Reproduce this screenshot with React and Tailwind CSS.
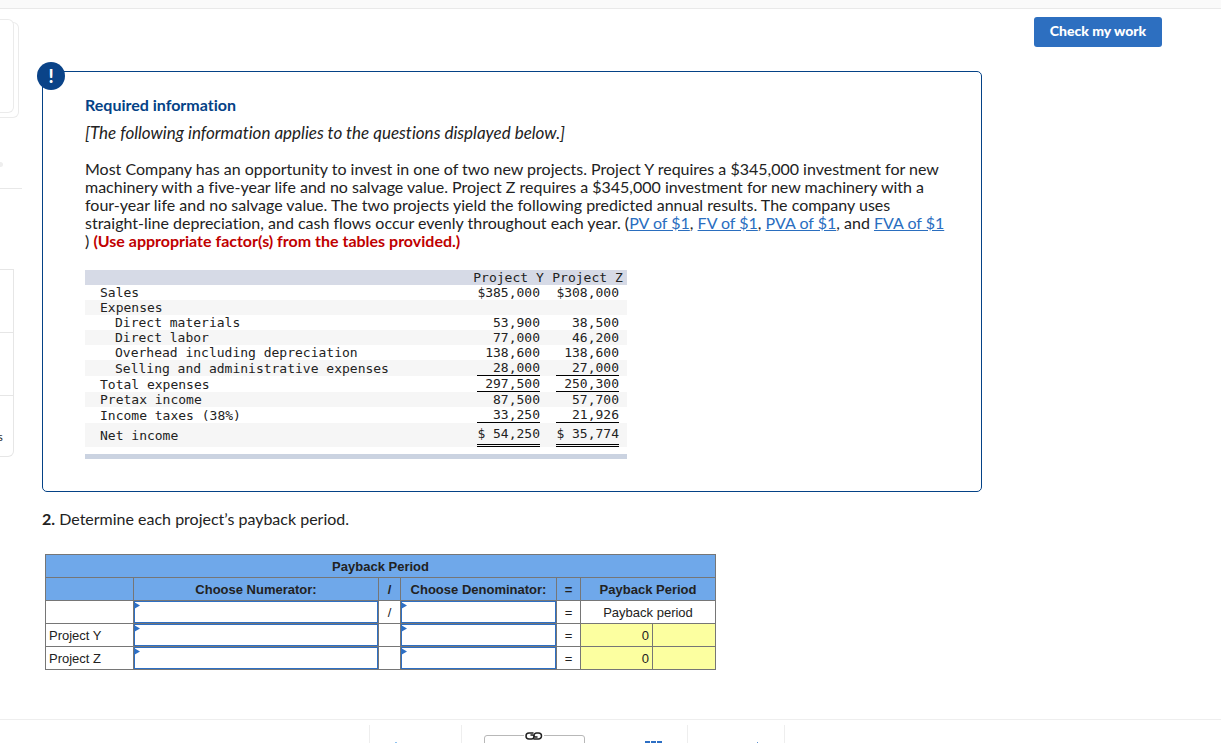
import React, { useState } from 'react';

const results = [
  { label: 'Sales', y: '$385,000', z: '$308,000' },
  { label: 'Expenses', y: '', z: '' },
  { label: 'Direct materials', y: '53,900', z: '38,500', indent: true },
  { label: 'Direct labor', y: '77,000', z: '46,200', indent: true },
  { label: 'Overhead including depreciation', y: '138,600', z: '138,600', indent: true },
  { label: 'Selling and administrative expenses', y: '28,000', z: '27,000', indent: true, line: true },
  { label: 'Total expenses', y: '297,500', z: '250,300', line: true },
  { label: 'Pretax income', y: '87,500', z: '57,700' },
  { label: 'Income taxes (38%)', y: '33,250', z: '21,926', line: true },
];

const link = 'text-[#2a6ebf] underline';
const cell = 'border border-[#767676] p-0 pt-[2px]';

function ResultsTable() {
  return (
    <table className="w-[542px] table-fixed border-collapse text-[13px] leading-[15px] [font-family:'DejaVu_Sans_Mono',monospace]">
      <colgroup>
        <col />
        <col className="w-[79px]" />
        <col className="w-[79px]" />
      </colgroup>
      <thead>
        <tr className="bg-[#d6dae6]">
          <td className="p-0" />
          <th className="p-0 text-center font-normal whitespace-nowrap">Project Y</th>
          <th className="p-0 text-center font-normal whitespace-nowrap">Project Z</th>
        </tr>
      </thead>
      <tbody>
        {results.map((r) => (
          <tr key={r.label} className="even:bg-[#f6f6f6]">
            <td className={r.indent ? 'p-0 pl-[30px] align-bottom' : 'p-0 pl-[15px] align-bottom'}>{r.label}</td>
            {[r.y, r.z].map((v, i) => (
              <td key={i} className="p-0">
                <div className={r.line ? 'mx-auto w-[63px] border-b border-black text-right' : 'mx-auto w-[63px] text-right'}>
                  {v}
                </div>
              </td>
            ))}
          </tr>
        ))}
        <tr className="bg-[#f6f6f6]">
          <td className="p-0 pl-[15px]">Net income</td>
          {['$ 54,250', '$ 35,774'].map((v) => (
            <td key={v} className="p-0 pt-[3px]">
              <div className="mx-auto w-[63px] border-b-3 border-double border-black pb-[3px] text-right">{v}</div>
            </td>
          ))}
        </tr>
      </tbody>
    </table>
  );
}

function Entry({ label }) {
  const [value, setValue] = useState('');
  return (
    <div className="relative h-[22px]">
      <input
        aria-label={label}
        value={value}
        onChange={(e) => setValue(e.target.value)}
        className="block h-full w-full border border-[#2d6fc4] bg-white px-1 outline-none"
      />
      <svg className="absolute top-px left-0" width="6" height="7" viewBox="0 0 6 7" aria-hidden="true">
        <path d="M0 0L6 3.5L0 7Z" fill="#2d6fc4" />
      </svg>
    </div>
  );
}

function PaybackTable() {
  return (
    <table className="w-[671px] table-fixed border-collapse text-[13px] leading-4 text-[#222] [font-family:'Liberation_Sans',Arial,sans-serif]">
      <colgroup>
        <col className="w-[88px]" />
        <col className="w-[245px]" />
        <col className="w-[22px]" />
        <col className="w-[156px]" />
        <col className="w-[24px]" />
        <col className="w-[72px]" />
        <col className="w-[63px]" />
      </colgroup>
      <thead className="bg-[#6fa8ea]">
        <tr className="h-[23px]">
          <th className={cell} colSpan="7">Payback Period</th>
        </tr>
        <tr className="h-[23px]">
          <td className={cell} />
          <th className={cell}>Choose Numerator:</th>
          <th className={cell}>/</th>
          <th className={cell}>Choose Denominator:</th>
          <th className={cell}>=</th>
          <th className={cell} colSpan="2">Payback Period</th>
        </tr>
      </thead>
      <tbody>
        {['', 'Project Y', 'Project Z'].map((name) => (
          <tr key={name} className="h-[23px]">
            <td className="border border-[#767676] p-0 pt-[2px] pl-[3px]">{name}</td>
            <td className="border border-[#767676] p-0"><Entry label={`${name} numerator`.trim()} /></td>
            <td className="border border-[#767676] p-0 pt-[2px] text-center">{name ? '' : '/'}</td>
            <td className="border border-[#767676] p-0"><Entry label={`${name} denominator`.trim()} /></td>
            <td className="border border-[#767676] p-0 pt-[2px] text-center">=</td>
            {name ? (
              <>
                <td className="border border-[#767676] bg-[#fcffa0] p-0 pt-[2px] pr-[3px] text-right">0</td>
                <td className="border border-[#767676] bg-[#fcffa0] p-0" />
              </>
            ) : (
              <td className="border border-[#767676] p-0 pt-[2px] text-center" colSpan="2">Payback period</td>
            )}
          </tr>
        ))}
      </tbody>
    </table>
  );
}

function Sidebar() {
  return (
    <aside className="w-[22px] shrink-0 overflow-hidden pt-[10px]">
      <div className="relative h-[99px]">
        <div className="absolute top-[3px] left-0 h-24 w-[19px] rounded-r-md border border-l-0 border-[#ebebeb]" />
        <div className="absolute top-0 left-0 h-[94px] w-[14px] rounded-r-md border border-l-0 border-[#ebebeb] bg-white" />
      </div>
      <div className="mt-11 -ml-0.5 h-[5px] w-[5px] rounded-full bg-[#eeeeee]" />
      <div className="mt-[21px] border-t border-[#e8e8e8]" />
      <div className="mt-20 w-[14px] divide-y divide-[#e6e6e6] rounded-br-md border border-l-0 border-[#e6e6e6]">
        <div className="h-[63px]" />
        <div className="h-[63px]" />
        <div className="flex h-[60px] items-end pb-[11px] text-[11px] leading-4">
          <span className="-ml-0.5">s</span>
        </div>
      </div>
    </aside>
  );
}

function Footer() {
  return (
    <footer className="h-6 overflow-hidden border-t border-[#eeeeee] pt-[5px]">
      <div className="mx-auto flex h-10 w-[416px] -translate-x-[34px] divide-x divide-[#eeeeee] border-x border-[#eeeeee]">
        <div className="w-[92px] pt-[17px] pl-[25px]">
          <div className="h-px w-0.5 bg-[#8fc3f0]" />
        </div>
        <div className="flex w-[226px] items-start pl-[22px]">
          <div className="relative mt-[10px] h-8 w-[101px] rounded-t-[3px] border border-[#b8b8b8]">
            <svg className="absolute -top-1 left-[39px] bg-white" width="20" height="8" viewBox="0 0 20 8" fill="none" stroke="#222" strokeWidth="1.5" strokeLinecap="round" aria-hidden="true">
              <path d="M9 1H5A3 3 0 0 0 2 4V4A3 3 0 0 0 5 7H7.500A2.500 2.500 0 0 0 10 4.500A1.500 1.500 0 0 0 8.500 3H7" />
              <path d="M10 7H14.500A3 3 0 0 0 17.500 4V4A3 3 0 0 0 14.500 1H12.500A2.500 2.500 0 0 0 10 3.500A1.500 1.500 0 0 0 11.500 5H13" />
            </svg>
          </div>
          <div className="mt-4 ml-[60px] flex gap-px">
            <span className="h-1 w-[5px] bg-[#2d6fc4]" />
            <span className="h-1 w-[5px] bg-[#2d6fc4]" />
            <span className="h-1 w-[5px] bg-[#2d6fc4]" />
          </div>
        </div>
        <div className="flex-1 pt-[17px] pl-[69px]">
          <div className="h-px w-px bg-[#5d91d2]" />
        </div>
      </div>
    </footer>
  );
}

export default function App() {
  return (
    <div className="flex min-h-screen flex-col bg-white text-[#222] [font-family:Lato,sans-serif] [font-variant-ligatures:none]">
      <header className="h-[9px] border-b border-[#e9e9e9] bg-[#fafafa]" />

      <div className="flex flex-1">
        <Sidebar />

        <main className="min-w-0 flex-1 pt-[62px] pl-5">
          <section className="relative rounded-[5px] border border-[#044286] px-[42px] pt-[23px] pb-8">
            <div className="absolute -top-[10px] -left-[6px] flex h-7 w-7 items-center justify-center rounded-full bg-[#0a4388] text-lg leading-none font-black text-white">
              !
            </div>
            <h2 className="text-[16px] leading-5 font-bold text-[#044286]">Required information</h2>
            <p className="mt-2 text-[17px] leading-5 italic">
              [The following information applies to the questions displayed below.]
            </p>
            <p className="mt-[17px] mb-5 text-[16px] leading-[18px] whitespace-nowrap">
              Most Company has an opportunity to invest in one of two new projects. Project Y requires a $345,000 investment for new<br />
              machinery with a five-year life and no salvage value. Project Z requires a $345,000 investment for new machinery with a<br />
              four-year life and no salvage value. The two projects yield the following predicted annual results. The company uses<br />
              straight-line depreciation, and cash flows occur evenly throughout each year. (<a href="#pv" className={link}>PV of $1</a>,{' '}
              <a href="#fv" className={link}>FV of $1</a>, <a href="#pva" className={link}>PVA of $1</a>, and{' '}
              <a href="#fva" className={link}>FVA of $1</a><br />
              ) <strong className="font-bold text-[#c00000]">(Use appropriate factor(s) from the tables provided.)</strong>
            </p>
            <ResultsTable />
            <div className="mt-[7px] h-[5px] w-[542px] bg-[#cbd3e1]" />
          </section>

          <p className="mt-[17px] mb-[25px] text-[16px] leading-5">
            <b>2.</b> Determine each project’s payback period.
          </p>
          <div className="pl-[3px]">
            <PaybackTable />
          </div>
        </main>

        <div className="w-[239px] shrink-0 pt-2 pl-[52px]">
          <button className="h-[30px] w-32 rounded-[3px] bg-[#2d6fc0] pb-[3px] text-[14px] font-black text-white">
            Check my work
          </button>
        </div>
      </div>

      <Footer />
    </div>
  );
}
